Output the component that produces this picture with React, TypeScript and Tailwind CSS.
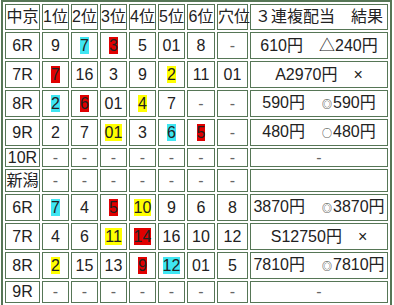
type Cell = string | { v: string; c: 'b' | 'r' | 'y' };

const hl: Record<string, string> = {
  b: 'bg-[#3fe6f2]',
  r: 'bg-[#e00000]',
  y: 'bg-[#ffff00]',
};

type Row = { label: string; cells: Cell[]; pay: React.ReactNode; h: string };

const dash = ['-', '-', '-', '-', '-', '-', '-'];

const rows: Row[] = [
  { label: '6R', cells: ['9', { v: '7', c: 'b' }, { v: '3', c: 'r' }, '5', '01', '8', '-'], pay: <>610円　△240円</>, h: 'h-[27px]' },
  { label: '7R', cells: [{ v: '7', c: 'r' }, '16', '3', '9', { v: '2', c: 'y' }, '11', '01'], pay: <>A2970円　×</>, h: 'h-[27px]' },
  { label: '8R', cells: [{ v: '2', c: 'b' }, { v: '6', c: 'r' }, '01', { v: '4', c: 'y' }, '7', '-', '-'], pay: <>590円　<Sym>◎</Sym>590円</>, h: 'h-[27px]' },
  { label: '9R', cells: ['2', '7', { v: '01', c: 'y' }, '3', { v: '6', c: 'b' }, { v: '5', c: 'r' }, '-'], pay: <>480円　<Sym>○</Sym>480円</>, h: 'h-[27px]' },
  { label: '10R', cells: dash, pay: '-', h: 'h-[19px]' },
  { label: '新潟', cells: dash, pay: '', h: 'h-[23px]' },
  { label: '6R', cells: [{ v: '7', c: 'b' }, '4', { v: '5', c: 'r' }, { v: '10', c: 'y' }, '9', '6', '8'], pay: <>3870円　<Sym>◎</Sym>3870円</>, h: 'h-[27px]' },
  { label: '7R', cells: ['4', '6', { v: '11', c: 'y' }, { v: '14', c: 'r' }, '16', '10', '12'], pay: <>S12750円　×</>, h: 'h-[27px]' },
  { label: '8R', cells: [{ v: '2', c: 'y' }, '15', '13', { v: '9', c: 'r' }, { v: '12', c: 'b' }, '01', '5'], pay: <>7810円　<Sym>◎</Sym>7810円</>, h: 'h-[27px]' },
  { label: '9R', cells: dash, pay: '-', h: 'h-[22px]' },
];

// small circle marks, drawn narrow as in the source page
function Sym({ children }: { children: React.ReactNode }) {
  return (
    <span className="text-[10px] mx-[1px]" style={{ fontFamily: '"Noto Sans CJK JP", sans-serif' }}>
      {children}
    </span>
  );
}

const td = 'border border-[#567656] p-0 text-center whitespace-nowrap';

export default function App() {
  return (
    <div className="w-[394px] h-[305px] bg-white pl-[1px]">
      <table
        className="table-fixed border-separate border-spacing-[2px] border-2 border-[#567656] w-[391px] text-[16px] leading-[16px] text-[#222]"
        style={{ fontFamily: '"Liberation Sans", "Noto Sans CJK JP", sans-serif' }}
      >
        <tbody>
          <tr>
            <td className={`${td} w-[35px] h-[26px]`}>中京</td>
            <td className={`${td} w-[27px]`}>1位</td>
            <td className={`${td} w-[27px]`}>2位</td>
            <td className={`${td} w-[27px]`}>3位</td>
            <td className={`${td} w-[27px]`}>4位</td>
            <td className={`${td} w-[27px]`}>5位</td>
            <td className={`${td} w-[28px]`}>6位</td>
            <td className={`${td} w-[31px]`}>穴位</td>
            <td className={`${td} w-[138px]`}>３連複配当　結果</td>
          </tr>
          {rows.map((r, i) => (
            <tr key={i}>
              <td className={`${td} ${r.h}`}>{r.label}</td>
              {r.cells.map((c, j) => (
                <td key={j} className={td}>
                  {typeof c === 'string' ? (
                    c === '-' ? <span className="text-[#666]">-</span> : c
                  ) : (
                    <span className={hl[c.c]}>{c.v}</span>
                  )}
                </td>
              ))}
              <td className={td}>{r.pay === '-' ? <span className="text-[#666]">-</span> : r.pay}</td>
            </tr>
          ))}
        </tbody>
      </table>
    </div>
  );
}
